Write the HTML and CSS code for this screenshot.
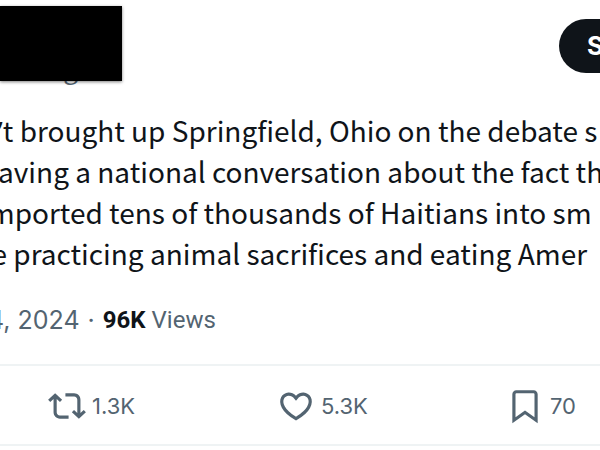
FILE: index.html
```html
<!DOCTYPE html>
<html lang="en">
<head>
<meta charset="utf-8">
<title>Post</title>
<link rel="stylesheet" href="styles.css">
</head>
<body>
<article class="post">
  <header class="post-header">
    <div class="author">
      <span class="handle">g</span>
      <div class="redaction"></div>
    </div>
    <button class="subscribe" type="button">Subscribe</button>
  </header>
  <p class="post-text">n<span class="apostrophe">’</span>t brought up Springfield, Ohio on the debate s<br>having a national conversation about the fact th<br>imported tens of thousands of Haitians into sm<br>re practicing animal sacrifices and eating Amer</p>
  <div class="meta"><span class="date">4, 2024</span><span>·</span><span class="views"><strong>96K</strong> Views</span></div>
  <div class="actions">
    <button class="action" type="button" aria-label="Repost, 1.3K">
      <svg class="icon" viewBox="0 0 24 24" aria-hidden="true"><path d="M4.5 3.88l4.432 4.14-1.364 1.46L5.5 7.55V16c0 1.1.896 2 2 2H13v2H7.5c-2.209 0-4-1.79-4-4V7.55L1.432 9.48.068 8.02 4.5 3.88zM16.5 6H11V4h5.5c2.209 0 4 1.79 4 4v8.45l2.068-1.93 1.364 1.46-4.432 4.14-4.432-4.14 1.364-1.46 2.068 1.93V8c0-1.1-.896-2-2-2z"/></svg>
      <span>1.3K</span>
    </button>
    <button class="action" type="button" aria-label="Like, 5.3K">
      <svg class="icon" viewBox="0 0 24 24" aria-hidden="true"><path d="M16.697 5.5c-1.222-.06-2.679.51-3.89 2.16l-.805 1.09-.806-1.09C9.984 6.01 8.526 5.44 7.304 5.5c-1.243.07-2.349.78-2.91 1.91-.552 1.12-.633 2.78.479 4.82 1.074 1.97 3.257 4.27 7.129 6.61 3.87-2.34 6.052-4.64 7.126-6.61 1.111-2.04 1.03-3.7.477-4.82-.561-1.13-1.666-1.84-2.908-1.91zm4.187 7.69c-1.351 2.48-4.001 5.12-8.379 7.67l-.503.3-.504-.3c-4.379-2.55-7.029-5.19-8.382-7.67-1.36-2.5-1.41-4.86-.514-6.67.887-1.79 2.647-2.91 4.601-3.01 1.651-.09 3.368.56 4.798 2.01 1.429-1.45 3.146-2.1 4.796-2.01 1.954.1 3.714 1.22 4.601 3.01.896 1.81.846 4.17-.514 6.67z"/></svg>
      <span>5.3K</span>
    </button>
    <button class="action" type="button" aria-label="Bookmark, 70">
      <svg class="icon" viewBox="0 0 24 24" aria-hidden="true"><path d="M4 4.5C4 3.12 5.119 2 6.5 2h11C18.881 2 20 3.12 20 4.5v18.44l-8-5.71-8 5.71V4.5zM6.5 4c-.276 0-.5.22-.5.5v14.56l6-4.29 6 4.29V4.5c0-.28-.224-.5-.5-.5h-11z"/></svg>
      <span>70</span>
    </button>
  </div>
</article>
</body>
</html>
```
FILE: styles.css
```css
* {
  box-sizing: border-box;
}

body {
  margin: 0;
  background: #fff;
  color: #0f1419;
  font-family: "Noto Sans CJK SC", sans-serif;
  overflow-x: hidden;
}

.post {
  overflow: hidden;
}

.post-header {
  display: flex;
  justify-content: space-between;
  align-items: flex-start;
  height: 110px;
  padding-top: 6px;
}

.author {
  position: relative;
  display: flex;
  align-items: flex-end;
  justify-content: flex-end;
  width: 122px;
  height: 76px;
}

.handle {
  margin-right: 44px;
  color: #536471;
  font-size: 26px;
  line-height: 28px;
}

.redaction {
  position: absolute;
  inset: 0 0 1px;
  background: #000;
  box-shadow: 0 1px 3px rgba(0, 0, 0, 0.5);
}

.subscribe {
  flex: none;
  height: 54px;
  margin: 13px -120px 0 0;
  padding: 0 28px;
  width: 161px;
  border: 0;
  border-radius: 27px;
  background: #0f1419;
  color: #fff;
  font: 700 25px/54px Inter, sans-serif;
  text-align: left;
}

.post-text {
  margin: 0 0 0 -19px;
  font-size: 28px;
  line-height: 41px;
  white-space: nowrap;
}

.apostrophe {
  font-family: "Open Sans", sans-serif;
  line-height: 1;
}

.meta {
  display: flex;
  gap: 8px;
  margin: 26px 0 0 -12px;
  color: #536471;
  font: 25px/40px Inter, sans-serif;
}

.views {
  font: 24px/40px Roboto, sans-serif;
}

.meta strong {
  color: #0f1419;
  font-weight: 700;
}

.actions {
  display: flex;
  height: 82px;
  margin-top: 24px;
  padding-left: 48px;
  border: solid #eff3f4;
  border-width: 2px 0;
}

.action {
  display: flex;
  flex: 0 0 229px;
  align-items: center;
  gap: 6px;
  padding: 2px 0 0;
  border: 0;
  background: none;
  color: #536471;
  font: 22px/28px Inter, sans-serif;
}

.icon {
  width: 38px;
  height: 38px;
  fill: currentColor;
}
```
